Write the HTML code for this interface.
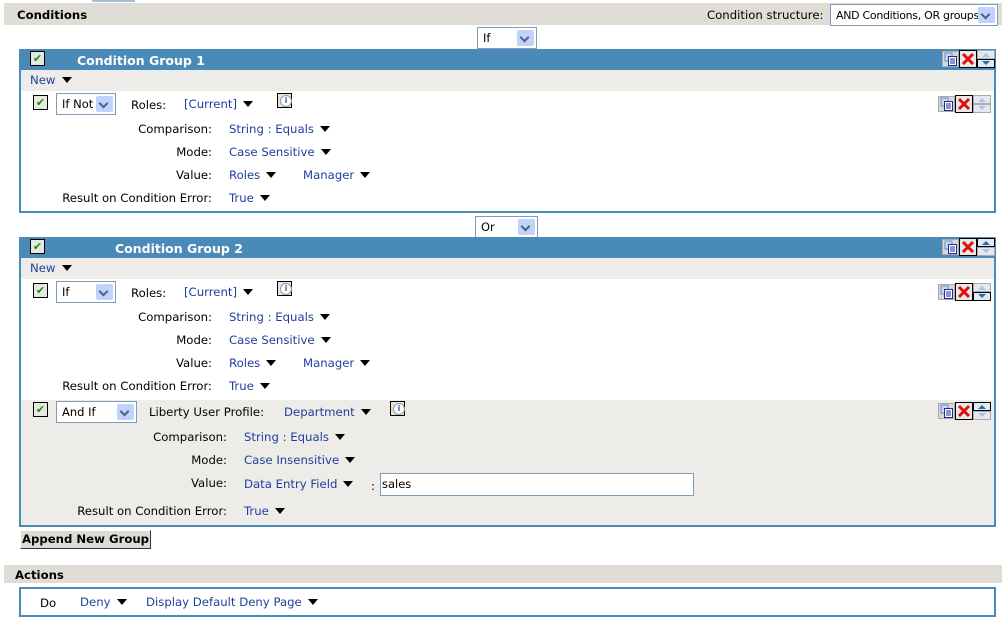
<!DOCTYPE html>
<html><head><meta charset="utf-8"><style>
*{margin:0;padding:0;box-sizing:border-box}
body{width:1002px;height:621px;background:#fff;font-family:"DejaVu Sans","Liberation Sans",sans-serif;font-size:11.7px;color:#000;position:relative;overflow:hidden}
.a{position:absolute;white-space:nowrap}
.t{margin-top:1px}
.bar{position:absolute;background:#e0ddd6}
.b{font-weight:bold}
.lnk{color:#1f3f9c}
.tri{display:inline-block;width:0;height:0;border-left:5px solid transparent;border-right:5px solid transparent;border-top:6px solid #000;margin-left:6px;vertical-align:1px}
.box{position:absolute;border:2px solid #4a8ab8;background:#fff}
.hdr{position:absolute;left:0;right:0;top:0;height:19px;background:#4a8ab8;color:#fff;font-weight:bold;font-size:12.5px}
.newr{position:absolute;left:0;right:0;background:#eeece8}
.chk{position:absolute;width:15px;height:15px;border:1px solid #000;background:#e8e8e0;color:#1a8a1a;font-size:11px;line-height:13px;text-align:center;font-weight:bold}
.sel{position:absolute;border:1px solid #7f9db9;background:#fff;height:22px;padding-left:5px;line-height:21px;font-size:11.5px;overflow:hidden}
.sel .dd{position:absolute;right:2px;top:2px;width:17px;height:16px;background:#c1d3fb;border-radius:2px}
.sel .dd:after{content:"";position:absolute;left:4px;top:4px;width:5px;height:5px;border-right:2px solid #4d6185;border-bottom:2px solid #4d6185;transform:rotate(45deg)}
.r{text-align:right}
.ico{position:absolute;width:56px;height:18px}
.info{position:absolute;width:15px;height:15px;border:1px solid #000;background:#e4e4e0}
.info:after{content:"i";position:absolute;left:2px;top:1px;width:10px;height:10px;border-radius:50%;border:1px solid #999;background:#fff;color:#2a70b0;font-size:8px;font-weight:bold;line-height:10px;text-align:center}
</style></head><body>
<div class="a" style="left:92px;top:0;width:43px;height:2px;background:#a8bfd8"></div>
<div class="bar" style="left:4px;top:3px;width:998px;height:22px"></div>
<div class="a b t" style="left:17px;top:7px">Conditions</div>
<div class="a t" style="left:707px;top:7px">Condition structure:</div>
<div class="sel" style="left:830px;top:4px;width:168px;font-size:11px;letter-spacing:-0.3px">AND Conditions, OR groups<span class="dd"></span></div>

<div class="sel" style="left:477px;top:27px;width:60px">If<span class="dd"></span></div>

<svg width="0" height="0" style="position:absolute">
<defs>
<g id="icons">
<rect x="0.5" y="1.5" width="16" height="15" fill="#d8d8d8" stroke="#aaa"/>
<rect x="3" y="3" width="7" height="8" fill="#c8d8f0" stroke="#6a8ac0"/>
<rect x="6.5" y="6.5" width="8" height="9" fill="#fff" stroke="#1a2a9a"/>
<path d="M8 9h5M8 11h5M8 13h5" stroke="#1a2a9a"/>
<rect x="17.5" y="0.5" width="17" height="17" fill="#e8e8e8" stroke="#000"/>
<path d="M21 4l10 10M31 4l-10 10" stroke="#e01010" stroke-width="3"/>
</g>
</defs>
</svg>

<div class="box" style="left:19px;top:49px;width:977px;height:164px">
 <div class="hdr"><span class="a" style="left:56px;top:2px">Condition Group 1</span></div>
 <div class="newr" style="top:19px;height:21px"><span class="a lnk" style="left:9px;top:3px">New<span class="tri"></span></span></div>
</div>
<div class="chk" style="left:30px;top:51px">✔</div>
<svg class="ico" style="left:942px;top:50px" viewBox="0 0 56 18"><use href="#icons"/><rect x="35.5" y="0.5" width="17" height="8" fill="#e4e8f0" stroke="#aaa"/><path d="M40 7l4-4 4 4z" fill="#a8c4e0"/><rect x="35.5" y="9.5" width="17" height="8" fill="#e4e8f0" stroke="#000"/><path d="M40 11l4 4 4-4z" fill="#2a6aa8"/></svg>

<div class="chk" style="left:33px;top:95px">✔</div>
<div class="sel" style="left:56px;top:93px;width:60px">If Not<span class="dd"></span></div>
<div class="a t" style="left:131px;top:97px">Roles:</div>
<div class="a lnk t" style="left:184px;top:96px">[Current]<span class="tri"></span></div>
<div class="info" style="left:277px;top:93px"></div>
<svg class="ico" style="left:938px;top:95px" viewBox="0 0 56 18"><use href="#icons"/><rect x="35.5" y="0.5" width="17" height="8" fill="#e4e8f0" stroke="#aaa"/><path d="M40 7l4-4 4 4z" fill="#a8c4e0"/><rect x="35.5" y="9.5" width="17" height="8" fill="#e4e8f0" stroke="#aaa"/><path d="M40 11l4 4 4-4z" fill="#a8c4e0"/></svg>
<div class="a r t" style="left:40px;width:172px;top:121px">Comparison:</div>
<div class="a lnk t" style="left:229px;top:121px">String : Equals<span class="tri"></span></div>
<div class="a r t" style="left:40px;width:172px;top:144px">Mode:</div>
<div class="a lnk t" style="left:229px;top:144px">Case Sensitive<span class="tri"></span></div>
<div class="a r t" style="left:40px;width:172px;top:167px">Value:</div>
<div class="a lnk t" style="left:229px;top:167px">Roles<span class="tri"></span></div>
<div class="a lnk t" style="left:303px;top:167px">Manager<span class="tri"></span></div>
<div class="a r t" style="left:20px;width:192px;top:190px">Result on Condition Error:</div>
<div class="a lnk t" style="left:229px;top:190px">True<span class="tri"></span></div>

<div class="sel" style="left:475px;top:216px;width:63px">Or<span class="dd"></span></div>

<div class="box" style="left:19px;top:237px;width:977px;height:290px">
 <div class="hdr"><span class="a" style="left:94px;top:2px">Condition Group 2</span></div>
 <div class="newr" style="top:19px;height:21px"><span class="a lnk" style="left:9px;top:3px">New<span class="tri"></span></span></div>
 <div class="newr" style="top:161px;height:125px"></div>
</div>
<div class="chk" style="left:30px;top:239px">✔</div>
<svg class="ico" style="left:942px;top:238px" viewBox="0 0 56 18"><use href="#icons"/><rect x="35.5" y="0.5" width="17" height="8" fill="#e4e8f0" stroke="#000"/><path d="M40 7l4-4 4 4z" fill="#2a6aa8"/><rect x="35.5" y="9.5" width="17" height="8" fill="#e4e8f0" stroke="#aaa"/><path d="M40 11l4 4 4-4z" fill="#a8c4e0"/></svg>

<div class="chk" style="left:33px;top:283px">✔</div>
<div class="sel" style="left:56px;top:281px;width:60px">If<span class="dd"></span></div>
<div class="a t" style="left:131px;top:285px">Roles:</div>
<div class="a lnk t" style="left:184px;top:284px">[Current]<span class="tri"></span></div>
<div class="info" style="left:277px;top:281px"></div>
<svg class="ico" style="left:938px;top:283px" viewBox="0 0 56 18"><use href="#icons"/><rect x="35.5" y="0.5" width="17" height="8" fill="#e4e8f0" stroke="#aaa"/><path d="M40 7l4-4 4 4z" fill="#a8c4e0"/><rect x="35.5" y="9.5" width="17" height="8" fill="#e4e8f0" stroke="#000"/><path d="M40 11l4 4 4-4z" fill="#2a6aa8"/></svg>
<div class="a r t" style="left:40px;width:172px;top:309px">Comparison:</div>
<div class="a lnk t" style="left:229px;top:309px">String : Equals<span class="tri"></span></div>
<div class="a r t" style="left:40px;width:172px;top:332px">Mode:</div>
<div class="a lnk t" style="left:229px;top:332px">Case Sensitive<span class="tri"></span></div>
<div class="a r t" style="left:40px;width:172px;top:355px">Value:</div>
<div class="a lnk t" style="left:229px;top:355px">Roles<span class="tri"></span></div>
<div class="a lnk t" style="left:303px;top:355px">Manager<span class="tri"></span></div>
<div class="a r t" style="left:20px;width:192px;top:378px">Result on Condition Error:</div>
<div class="a lnk t" style="left:229px;top:378px">True<span class="tri"></span></div>

<div class="chk" style="left:33px;top:402px">✔</div>
<div class="sel" style="left:56px;top:401px;width:81px">And If<span class="dd"></span></div>
<div class="a t" style="left:149px;top:404px">Liberty User Profile:</div>
<div class="a lnk t" style="left:284px;top:404px">Department<span class="tri"></span></div>
<div class="info" style="left:390px;top:401px"></div>
<svg class="ico" style="left:938px;top:402px" viewBox="0 0 56 18"><use href="#icons"/><rect x="35.5" y="0.5" width="17" height="8" fill="#e4e8f0" stroke="#000"/><path d="M40 7l4-4 4 4z" fill="#2a6aa8"/><rect x="35.5" y="9.5" width="17" height="8" fill="#e4e8f0" stroke="#aaa"/><path d="M40 11l4 4 4-4z" fill="#a8c4e0"/></svg>
<div class="a r t" style="left:40px;width:187px;top:429px">Comparison:</div>
<div class="a lnk t" style="left:244px;top:429px">String : Equals<span class="tri"></span></div>
<div class="a r t" style="left:40px;width:187px;top:452px">Mode:</div>
<div class="a lnk t" style="left:244px;top:452px">Case Insensitive<span class="tri"></span></div>
<div class="a r t" style="left:40px;width:187px;top:475px">Value:</div>
<div class="a lnk t" style="left:244px;top:476px">Data Entry Field<span class="tri"></span></div>
<div class="a" style="left:371px;top:479px">:</div>
<div class="a" style="left:380px;top:473px;width:314px;height:23px;border:1px solid #7f9db9;background:#fff;padding:3px 1px;font-size:11.5px">sales</div>
<div class="a r t" style="left:20px;width:207px;top:503px">Result on Condition Error:</div>
<div class="a lnk t" style="left:244px;top:503px">True<span class="tri"></span></div>

<div class="a b" style="left:20px;top:530px;width:131px;height:19px;background:#dedbd4;border-right:1px solid #333;border-bottom:1px solid #333;border-top:1px solid #fff;border-left:1px solid #fff;text-align:center;line-height:16px">Append New Group</div>

<div class="bar" style="left:4px;top:565px;width:998px;height:18px"></div>
<div class="a b t" style="left:15px;top:567px">Actions</div>
<div class="box" style="left:19px;top:587px;width:977px;height:30px"></div>
<div class="a t" style="left:40px;top:595px">Do</div>
<div class="a lnk t" style="left:80px;top:594px">Deny<span class="tri"></span></div>
<div class="a lnk t" style="left:146px;top:594px">Display Default Deny Page<span class="tri"></span></div>
</body></html>
